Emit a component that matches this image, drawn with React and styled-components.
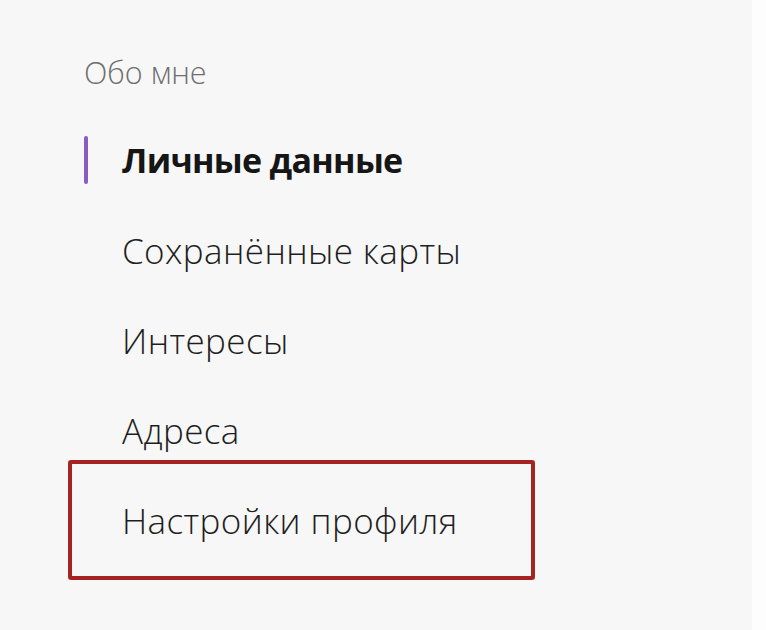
import styled, { createGlobalStyle } from "styled-components";

const GlobalStyle = createGlobalStyle`
  html, body {
    margin: 0;
    padding: 0;
    background: #fdfdfd;
  }
`;

const Page = styled.div`
  display: flex;
  width: 766px;
  height: 630px;
  background: #fdfdfd;
`;

const Panel = styled.nav`
  width: 752px;
  height: 630px;
  background: #f7f7f7;
  padding: 52px 0 0 68px;
  box-sizing: border-box;
  font-family: "Open Sans", "Noto Sans", sans-serif;
`;

const Heading = styled.div`
  padding-left: 16px;
  font-size: 30.5px;
  font-weight: 300;
  color: #6e6e6e;
  line-height: 40px;
  margin-bottom: 23px;
`;

const Menu = styled.ul`
  list-style: none;
  margin: 0;
  padding: 0;
  width: 467px;
`;

const Item = styled.li`
  position: relative;
  display: flex;
  align-items: center;
  height: 90px;
  padding-left: 54px;
  box-sizing: border-box;
  font-size: ${(p) => (p.$active ? "34px" : "35px")};
  font-weight: ${(p) => (p.$active ? 700 : 300)};
  color: ${(p) => (p.$active ? "#161616" : "#1e1e1e")};
  letter-spacing: ${(p) => (p.$active ? "-0.7px" : "0.4px")};

  ${(p) =>
    p.$active &&
    `
    &::before {
      content: "";
      position: absolute;
      left: 16px;
      top: 21px;
      width: 4px;
      height: 48px;
      border-radius: 2px;
      background: #8a5cc2;
    }
  `}

  ${(p) =>
    p.$marked &&
    `
    height: 120px;
    margin-top: -15px;
    padding-left: 50px;
    border: 4px solid #a52323;
    border-radius: 3px;
  `}
`;

const items = [
  { label: "Личные данные", active: true },
  { label: "Сохранённые карты" },
  { label: "Интересы" },
  { label: "Адреса" },
  { label: "Настройки профиля", marked: true },
];

export default function App() {
  return (
    <Page>
      <GlobalStyle />
      <Panel>
        <Heading>Обо мне</Heading>
        <Menu>
          {items.map((item) => (
            <Item key={item.label} $active={item.active} $marked={item.marked}>
              {item.label}
            </Item>
          ))}
        </Menu>
      </Panel>
    </Page>
  );
}
